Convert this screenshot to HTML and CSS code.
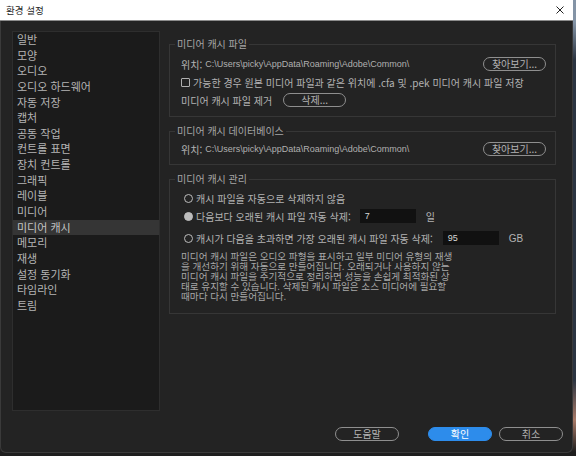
FILE: index.html
```html
<!DOCTYPE html>
<html lang="ko">
<head>
<meta charset="utf-8">
<title>환경 설정</title>
<link rel="stylesheet" href="styles.css">
</head>
<body>
<div class="desk">
<div class="window">
  <div class="titlebar">
    <span class="title">환경 설정</span>
    <svg class="close" width="8" height="8" viewBox="0 0 8 8"><path d="M0.5 0.5L7.5 7.5M7.5 0.5L0.5 7.5" stroke="#222" stroke-width="1"/></svg>
  </div>
  <div class="main">
    <ul class="sidebar">
      <li>일반</li>
      <li>모양</li>
      <li>오디오</li>
      <li>오디오 하드웨어</li>
      <li>자동 저장</li>
      <li>캡처</li>
      <li>공동 작업</li>
      <li>컨트롤 표면</li>
      <li>장치 컨트롤</li>
      <li>그래픽</li>
      <li>레이블</li>
      <li>미디어</li>
      <li class="sel">미디어 캐시</li>
      <li>메모리</li>
      <li>재생</li>
      <li>설정 동기화</li>
      <li>타임라인</li>
      <li>트림</li>
    </ul>
    <div class="panel">
      <fieldset class="group g1">
        <legend>미디어 캐시 파일</legend>
        <div class="row">
          <span>위치:</span><span class="path">C:\Users\picky\AppData\Roaming\Adobe\Common\</span>
          <span class="btn browse">찾아보기...</span>
        </div>
        <div class="row">
          <span class="check"></span><span>가능한 경우 원본 미디어 파일과 같은 위치에 .cfa 및 .pek 미디어 캐시 파일 저장</span>
        </div>
        <div class="row">
          <span>미디어 캐시 파일 제거</span><span class="btn del">삭제...</span>
        </div>
      </fieldset>
      <fieldset class="group g2">
        <legend>미디어 캐시 데이터베이스</legend>
        <div class="row">
          <span>위치:</span><span class="path">C:\Users\picky\AppData\Roaming\Adobe\Common\</span>
          <span class="btn browse">찾아보기...</span>
        </div>
      </fieldset>
      <fieldset class="group g3">
        <legend>미디어 캐시 관리</legend>
        <div class="row r1">
          <span class="radio"></span><span>캐시 파일을 자동으로 삭제하지 않음</span>
        </div>
        <div class="row r2">
          <span class="radio on"></span><span>다음보다 오래된 캐시 파일 자동 삭제:</span>
          <span class="field f1">7</span><span class="unit">일</span>
        </div>
        <div class="row r3">
          <span class="radio"></span><span>캐시가 다음을 초과하면 가장 오래된 캐시 파일 자동 삭제:</span>
          <span class="field f2">95</span><span class="unit">GB</span>
        </div>
        <p class="desc">미디어 캐시 파일은 오디오 파형을 표시하고 일부 미디어 유형의 재생<br>을 개선하기 위해 자동으로 만들어집니다. 오래되거나 사용하지 않는<br>미디어 캐시 파일을 주기적으로 정리하면 성능을 손쉽게 최적화된 상<br>태로 유지할 수 있습니다. 삭제된 캐시 파일은 소스 미디어에 필요할<br>때마다 다시 만들어집니다.</p>
      </fieldset>
    </div>
  </div>
  <div class="footer">
    <span class="btn fbtn">도움말</span>
    <span class="btn fbtn primary">확인</span>
    <span class="btn fbtn">취소</span>
  </div>
</div>
</div>
</body>
</html>
```
FILE: styles.css
```css
* { box-sizing: border-box; }
html, body { margin: 0; padding: 0; }
body {
  width: 576px;
  height: 456px;
  overflow: hidden;
  background: linear-gradient(180deg, #8494a6 0px, #8494a6 22px, #2b3441 60px, #2b3441 380px, #a87a68 420px, #1e1e1e 452px);
  font-family: "Noto Sans CJK KR", "Noto Sans", sans-serif;
}
.desk { width: 576px; height: 456px; }
.window {
  width: 573px;
  height: 453px;
  background: #232323;
  border: 1px solid #3a3a3a;
  border-top: none;
  border-radius: 0 0 6px 6px;
  display: flex;
  flex-direction: column;
}
.titlebar {
  height: 21px;
  flex: none;
  background: #ffffff;
  border-bottom: 1px solid #8c8c8c;
  display: flex;
  align-items: center;
  justify-content: space-between;
  padding: 0 9px 0 6px;
  margin: 0 -1px;
}
.title { font-size: 9.5px; color: #1e1e1e; line-height: 12px; }
.close { display: block; }
.main {
  display: flex;
  align-items: flex-start;
  padding: 10px 0 0 11px;
  gap: 9px;
  height: 390px;
  flex: none;
}
.sidebar {
  list-style: none;
  margin: 0;
  padding: 0;
  width: 148px;
  height: 380px;
  background: #1b1b1b;
  border: 1px solid #2e2e2e;
  flex: none;
}
.sidebar li {
  height: 15.65px;
  line-height: 15.65px;
  font-size: 11px;
  color: #b5b5b5;
  padding-left: 4px;
  white-space: nowrap;
}
.sidebar li.sel { background: #353535; color: #c4c4c4; }
.panel {
  width: 387px;
  margin-top: 7px;
  display: flex;
  flex-direction: column;
  gap: 8px;
}
.group {
  margin: 0;
  border: 1px solid #363636;
  padding: 0 9px 0 11px;
  min-width: 0;
}
.group legend {
  font-size: 10px;
  line-height: 12px;
  color: #a6a6a6;
  padding: 0 2px;
  margin-left: -6px;
}
.row {
  display: flex;
  align-items: center;
  height: 16px;
  font-size: 10px;
  color: #b3b3b3;
  white-space: nowrap;
}
.g1 { padding-top: 6px; padding-bottom: 8px; }
.g1 .row + .row { margin-top: 2px; }
.g2 { padding-top: 4px; padding-bottom: 7px; }
.path {
  font-family: "Liberation Sans", Arial, sans-serif;
  font-size: 9px;
  color: #b0b0b0;
  margin-left: 3px;
}
.btn {
  display: inline-flex;
  align-items: center;
  justify-content: center;
  height: 14px;
  border: 1px solid #8f8f8f;
  border-radius: 8px;
  font-size: 10px;
  color: #b3b3b3;
  line-height: 12px;
}
.browse { width: 63px; margin-left: auto; }
.del { width: 63px; margin-left: 11px; }
.check {
  width: 9px;
  height: 9px;
  border: 1px solid #b0b0b0;
  border-radius: 1px;
  margin-right: 3px;
  flex: none;
}
.g3 { padding-top: 5px; padding-bottom: 12px; }
.r2 { margin-top: 2px; }
.r3 { margin-top: 6px; }
.radio {
  width: 9px;
  height: 9px;
  border: 1.5px solid #bcbcbc;
  border-radius: 50%;
  margin: 0 3px 0 3px;
  flex: none;
}
.radio.on { background: #bcbcbc; }
.field {
  height: 14px;
  width: 56px;
  background: #111111;
  font-family: "Liberation Sans", Arial, sans-serif;
  font-size: 9px;
  color: #d8d8d8;
  line-height: 14px;
  padding-left: 5px;
}
.f1 { margin-left: 9px; }
.f2 { margin-left: 10px; }
.unit { margin-left: 10px; font-family: "Liberation Sans", "Noto Sans CJK KR", sans-serif; }
.desc {
  margin: 5px 0 0 0;
  font-size: 9.6px;
  line-height: 10px;
  color: #a8a8a8;
  white-space: nowrap;
}
.footer {
  display: flex;
  align-items: center;
  padding: 16px 9px 0 0;
  justify-content: flex-end;
}
.fbtn { width: 64px; }
.fbtn + .fbtn { margin-left: 7px; }
.fbtn:first-child { margin-right: 22px; }
.primary { background: #2d8ceb; border-color: #2d8ceb; color: #ffffff; }
```
